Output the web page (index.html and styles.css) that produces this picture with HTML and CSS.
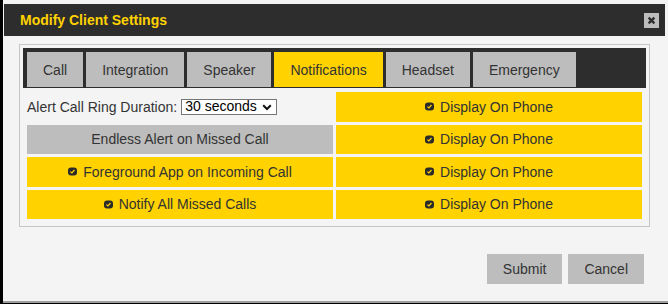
FILE: index.html
```html
<!DOCTYPE html>
<html lang="en">
<head>
<meta charset="utf-8">
<title>Modify Client Settings</title>
<link rel="stylesheet" href="styles.css">
</head>
<body>
<div class="frame">
  <div class="dialog">
    <div class="titlebar">
      <span class="title">Modify Client Settings</span>
      <button class="close" type="button" aria-label="Close">
        <svg width="15" height="15" viewBox="0 0 15 15"><path d="M4.6 4.6 L10.4 10.4 M10.4 4.6 L4.6 10.4" stroke="#2d2d2d" stroke-width="2.3" stroke-linecap="butt"/></svg>
      </button>
    </div>
    <div class="panel">
      <div class="tabs">
        <div class="tab">Call</div>
        <div class="tab">Integration</div>
        <div class="tab">Speaker</div>
        <div class="tab active">Notifications</div>
        <div class="tab">Headset</div>
        <div class="tab">Emergency</div>
      </div>
      <div class="grid">
        <div class="cell plain">
          <span class="label">Alert Call Ring Duration:</span>
          <span class="select-wrap">
            <select class="select"><option>30 seconds</option></select>
            <svg class="chev" width="10" height="7" viewBox="0 0 10 7"><path d="M1.2 1.3 L5 5 L8.8 1.3" fill="none" stroke="#111" stroke-width="2"/></svg>
          </span>
        </div>
        <div class="cell on"><svg class="chk" width="9" height="9" viewBox="0 0 9 9"><rect x="0" y="0.5" width="9" height="8" rx="3" fill="#2b2b2b"/><path d="M2.4 4.6 L3.9 6 L6.5 3" fill="none" stroke="#ffd200" stroke-width="1.2"/></svg>Display On Phone</div>
        <div class="cell off">Endless Alert on Missed Call</div>
        <div class="cell on"><svg class="chk" width="9" height="9" viewBox="0 0 9 9"><rect x="0" y="0.5" width="9" height="8" rx="3" fill="#2b2b2b"/><path d="M2.4 4.6 L3.9 6 L6.5 3" fill="none" stroke="#ffd200" stroke-width="1.2"/></svg>Display On Phone</div>
        <div class="cell on"><svg class="chk" width="9" height="9" viewBox="0 0 9 9"><rect x="0" y="0.5" width="9" height="8" rx="3" fill="#2b2b2b"/><path d="M2.4 4.6 L3.9 6 L6.5 3" fill="none" stroke="#ffd200" stroke-width="1.2"/></svg>Foreground App on Incoming Call</div>
        <div class="cell on"><svg class="chk" width="9" height="9" viewBox="0 0 9 9"><rect x="0" y="0.5" width="9" height="8" rx="3" fill="#2b2b2b"/><path d="M2.4 4.6 L3.9 6 L6.5 3" fill="none" stroke="#ffd200" stroke-width="1.2"/></svg>Display On Phone</div>
        <div class="cell on"><svg class="chk" width="9" height="9" viewBox="0 0 9 9"><rect x="0" y="0.5" width="9" height="8" rx="3" fill="#2b2b2b"/><path d="M2.4 4.6 L3.9 6 L6.5 3" fill="none" stroke="#ffd200" stroke-width="1.2"/></svg>Notify All Missed Calls</div>
        <div class="cell on"><svg class="chk" width="9" height="9" viewBox="0 0 9 9"><rect x="0" y="0.5" width="9" height="8" rx="3" fill="#2b2b2b"/><path d="M2.4 4.6 L3.9 6 L6.5 3" fill="none" stroke="#ffd200" stroke-width="1.2"/></svg>Display On Phone</div>
      </div>
    </div>
    <div class="actions">
      <button class="btn" type="button">Submit</button>
      <button class="btn" type="button">Cancel</button>
    </div>
  </div>
</div>
</body>
</html>
```
FILE: styles.css
```css
html, body {
  margin: 0;
  padding: 0;
  background: #f4f4f4;
}
body {
  font-family: "Liberation Sans", Arial, sans-serif;
  font-size: 14px;
  color: #333;
}
.frame {
  width: 668px;
  height: 304px;
  box-sizing: border-box;
  border-left: 3px solid #000;
  border-bottom: 1px solid #000;
}
.dialog {
  height: 100%;
  box-sizing: border-box;
  background: #f4f4f4;
  border-bottom: 2px solid #9e9e9e;
  padding: 4px 3px 0 1px;
  display: flex;
  flex-direction: column;
}
.titlebar {
  height: 32px;
  background: #2d2d2d;
  display: flex;
  align-items: center;
  justify-content: space-between;
  padding: 0 6px 0 16px;
}
.title {
  color: #ffd200;
  font-weight: bold;
  font-size: 14px;
}
.close {
  width: 15px;
  height: 15px;
  padding: 0;
  margin: 1px 0 0 0;
  border: 0;
  background: #bdbdbd;
  display: flex;
}
.panel {
  margin: 8px 15px 0 15px;
  border: 1px solid #c6c6c6;
  padding: 3px;
}
.tabs {
  background: #2d2d2d;
  display: flex;
  gap: 3px;
  padding: 4px 4px 1px 4px;
}
.tab {
  height: 35px;
  display: flex;
  align-items: center;
  padding: 0 16px;
  background: #bdbdbd;
  color: #333;
}
.tab.active {
  background: #ffd200;
}
.grid {
  display: grid;
  grid-template-columns: 1fr 1fr;
  grid-auto-rows: 29.5px;
  gap: 3px;
  padding: 4px;
}
.cell {
  display: flex;
  align-items: center;
  justify-content: center;
  color: #333;
}
.cell.on {
  background: #ffd200;
}
.cell.off {
  background: #bdbdbd;
}
.cell.plain {
  justify-content: flex-start;
}
.chk {
  margin-right: 6px;
  flex: none;
}
.label {
  color: #333;
}
.select-wrap {
  position: relative;
  display: inline-flex;
  margin-left: 4px;
}
.select {
  appearance: none;
  -webkit-appearance: none;
  width: 96px;
  height: 16px;
  box-sizing: border-box;
  border: 1px solid #767676;
  border-radius: 0;
  background: #fff;
  font-family: "Liberation Sans", Arial, sans-serif;
  font-size: 14px;
  line-height: 13px;
  color: #000;
  padding: 0 0 0 3px;
  margin: 0;
}
.chev {
  position: absolute;
  right: 5px;
  top: 5px;
  pointer-events: none;
}
.actions {
  display: flex;
  justify-content: flex-end;
  gap: 6px;
  margin-top: 27px;
  padding-right: 21px;
}
.btn {
  height: 30px;
  padding: 0 16px;
  border: 0;
  background: #bdbdbd;
  color: #333;
  font-family: "Liberation Sans", Arial, sans-serif;
  font-size: 14px;
}
```
